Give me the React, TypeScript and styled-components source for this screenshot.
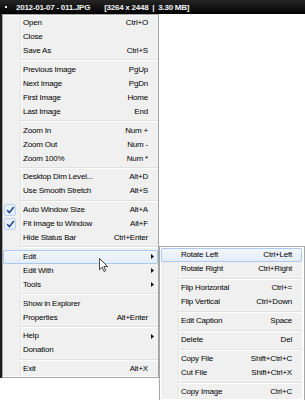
import React from 'react'
import styled, { createGlobalStyle } from 'styled-components'

type Entry =
  | { kind: 'item'; label: string; shortcut?: string; sub?: boolean; checked?: boolean; active?: boolean }
  | { kind: 'sep' }

const item = (label: string, shortcut?: string, extra: Partial<Entry> = {}): Entry =>
  ({ kind: 'item', label, shortcut, ...extra } as Entry)
const sep: Entry = { kind: 'sep' }

const mainEntries: Entry[] = [
  item('Open', 'Ctrl+O'),
  item('Close'),
  item('Save As', 'Ctrl+S'),
  sep,
  item('Previous Image', 'PgUp'),
  item('Next Image', 'PgDn'),
  item('First Image', 'Home'),
  item('Last Image', 'End'),
  sep,
  item('Zoom In', 'Num +'),
  item('Zoom Out', 'Num -'),
  item('Zoom 100%', 'Num *'),
  sep,
  item('Desktop Dim Level...', 'Alt+D'),
  item('Use Smooth Stretch', 'Alt+S'),
  sep,
  item('Auto Window Size', 'Alt+A', { checked: true }),
  item('Fit Image to Window', 'Alt+F', { checked: true }),
  item('Hide Status Bar', 'Ctrl+Enter'),
  sep,
  item('Edit', undefined, { sub: true, active: true }),
  item('Edit With', undefined, { sub: true }),
  item('Tools', undefined, { sub: true }),
  sep,
  item('Show in Explorer'),
  item('Properties', 'Alt+Enter'),
  sep,
  item('Help', undefined, { sub: true }),
  item('Donation'),
  sep,
  item('Exit', 'Alt+X'),
]

const editEntries: Entry[] = [
  item('Rotate Left', 'Ctrl+Left', { active: true }),
  item('Rotate Right', 'Ctrl+Right'),
  sep,
  item('Flip Horizontal', 'Ctrl+='),
  item('Flip Vertical', 'Ctrl+Down'),
  sep,
  item('Edit Caption', 'Space'),
  sep,
  item('Delete', 'Del'),
  sep,
  item('Copy File', 'Shift+Ctrl+C'),
  item('Cut File', 'Shift+Ctrl+X'),
  sep,
  item('Copy Image', 'Ctrl+C'),
]

const GlobalStyle = createGlobalStyle`
  html, body {
    margin: 0;
    padding: 0;
    background: #ffffff;
  }
  body {
    font-family: "Liberation Sans", Arial, sans-serif;
  }
`

const Arrow = () => (
  <svg width="3" height="5" viewBox="0 0 3 5">
    <polygon points="0,0 3,2.5 0,5" fill="#111" />
  </svg>
)

const Check = () => (
  <svg width="9" height="8" viewBox="0 0 9 8">
    <path d="M1.2 4.2 L3.4 6.6 L7.8 1" fill="none" stroke="#1d3e8e" strokeWidth="1.5" />
  </svg>
)

const MenuList = ({ entries, sepHeight }: { entries: Entry[]; sepHeight: number }) => (
  <>
    {entries.map((e, i) =>
      e.kind === 'sep' ? (
        <Separator key={i} $h={sepHeight} />
      ) : (
        <Row key={i} $active={e.active}>
          <Gutter>
            {e.checked && (
              <CheckBox>
                <Check />
              </CheckBox>
            )}
          </Gutter>
          <Label>{e.label}</Label>
          <Shortcut>{e.shortcut}</Shortcut>
          <ArrowCell>{e.sub && <Arrow />}</ArrowCell>
        </Row>
      )
    )}
  </>
)

export default function App() {
  return (
    <Page>
      <GlobalStyle />
      <TitleBar>
        <Dot />
        <TitleText>2012-01-07 - 011.JPG</TitleText>
        <TitleText $gap={14}>[3264 x 2448</TitleText>
        <TitleText $gap={4}>|</TitleText>
        <TitleText $gap={4}>3.30 MB]</TitleText>
      </TitleBar>
      <Body>
        <MainColumn>
          <DarkEdge />
          <Menu $width={157} $padLeft={0}>
            <MenuList entries={mainEntries} sepHeight={4.75} />
          </Menu>
        </MainColumn>
        <SubMenu $width={146} $padLeft={1}>
          <MenuList entries={editEntries} sepHeight={5} />
        </SubMenu>
      </Body>
      <Cursor width="9" height="14" viewBox="0 0 12 19">
        <path
          d="M0.5 0.5 L0.5 16 L4.2 12.4 L6.8 18.3 L9 17.3 L6.5 11.6 L11.5 11.6 Z"
          fill="#fff"
          stroke="#000"
          strokeWidth="1"
          strokeLinejoin="round"
        />
      </Cursor>
    </Page>
  )
}

const Page = styled.div`
  position: relative;
  width: 305px;
  height: 400px;
  overflow: hidden;
  background: #ffffff;
`

const TitleBar = styled.div`
  display: flex;
  align-items: center;
  height: 14px;
  padding-left: 5px;
  box-sizing: border-box;
  background: linear-gradient(#262626, #020202);
`

const Dot = styled.span`
  width: 2px;
  height: 2px;
  margin-right: 9px;
  background: #e8e8e8;
`

const TitleText = styled.span<{ $gap?: number }>`
  margin-left: ${p => p.$gap ?? 0}px;
  color: #f4f4f4;
  font-size: 8px;
  font-weight: 700;
  letter-spacing: -0.25px;
  white-space: pre;
`

const Body = styled.div`
  display: flex;
  align-items: flex-start;
`

const MainColumn = styled.div`
  display: flex;
`

const DarkEdge = styled.div`
  width: 2px;
  background: #1c1c1c;
`

const Menu = styled.div<{ $width: number; $padLeft: number }>`
  box-sizing: border-box;
  width: ${p => p.$width}px;
  padding: 1px 0 1px ${p => p.$padLeft}px;
  border: 1px solid #a7a7a7;
  background-color: #f0f0f0;
  background-image: linear-gradient(
    to right,
    transparent 17px,
    #e2e3e3 17px,
    #e2e3e3 18px,
    #ffffff 18px,
    #ffffff 19px,
    transparent 19px
  );
  background-origin: content-box;
  background-clip: content-box;
  background-repeat: no-repeat;
  color: #000000;
  font-size: 8px;
  letter-spacing: -0.2px;
`

const SubMenu = styled(Menu)`
  margin-top: 232px;
  padding-right: 2px;
  box-shadow: 2px 2px 3px rgba(0, 0, 0, 0.18);
`

const Row = styled.div<{ $active?: boolean }>`
  display: grid;
  grid-template-columns: 19px 1fr auto 9px;
  align-items: center;
  height: 14px;
  box-sizing: border-box;
  border: 1px solid ${p => (p.$active ? '#a9cbf1' : 'transparent')};
  border-radius: 2px;
  background: ${p => (p.$active ? 'linear-gradient(#f3f7fc, #e4ecf7)' : 'transparent')};
  white-space: nowrap;
`

const Gutter = styled.div`
  display: flex;
  align-items: center;
  height: 12px;
`

const CheckBox = styled.div`
  display: flex;
  align-items: center;
  justify-content: center;
  width: 12px;
  height: 12px;
  box-sizing: border-box;
  border: 1px solid #bcd3ee;
  border-radius: 2px;
  background: #e6eef8;
`

const Label = styled.span`
  line-height: 12px;
`

const Shortcut = styled.span`
  line-height: 12px;
  text-align: right;
`

const ArrowCell = styled.span`
  display: flex;
  justify-content: center;
  align-items: center;
`

const Separator = styled.div<{ $h: number }>`
  display: flex;
  flex-direction: column;
  justify-content: center;
  height: ${p => p.$h}px;
  margin-left: 17px;

  &::after {
    content: '';
    height: 1px;
    background: #e0e0e0;
    border-bottom: 1px solid #ffffff;
  }
`

const Cursor = styled.svg`
  position: absolute;
  left: 99px;
  top: 258px;
`
